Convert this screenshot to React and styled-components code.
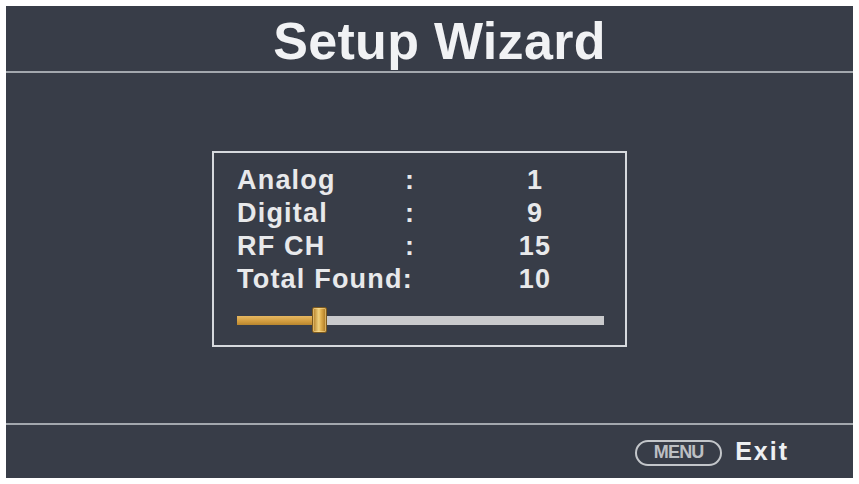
import React from "react";
import styled, { createGlobalStyle } from "styled-components";

const Global = createGlobalStyle`
  html, body { margin: 0; padding: 0; background: #ffffff; }
  body { font-family: "Liberation Sans", Arial, sans-serif; }
  * { box-sizing: border-box; }
`;

const Screen = styled.div`
  margin: 6px;
  width: 847px;
  height: 472px;
  background: #383d48;
  display: flex;
  flex-direction: column;
  font-family: "Liberation Sans", Arial, sans-serif;
`;

const Header = styled.div`
  height: 65px;
  padding-top: 5px;
  display: flex;
  align-items: center;
  justify-content: center;
`;

const Title = styled.h1`
  margin: 0 0 0 20px;
  font-size: 52px;
  line-height: 52px;
  font-weight: 700;
  color: #f1f2f4;
  letter-spacing: 0.3px;
`;

const Divider = styled.div`
  height: 2px;
  flex: none;
  background: #a3a8ae;
`;

const Main = styled.div`
  height: 350px;
  flex: none;
  display: flex;
  align-items: flex-start;
  padding: 78px 0 0 206px;
`;

const Box = styled.div`
  width: 415px;
  height: 196px;
  border: 2px solid #d6d9dd;
  padding: 11px 0 0 23px;
  display: flex;
  flex-direction: column;
`;

const Rows = styled.div`
  display: grid;
  grid-template-columns: 168px 80px 100px;
`;

const Cell = styled.div`
  font-size: 27px;
  line-height: 33px;
  font-weight: 700;
  color: #e8e9eb;
  letter-spacing: 1.2px;
  white-space: nowrap;
  grid-column: ${(p) => (p.$span ? "span 2" : "auto")};
  text-align: ${(p) => (p.$center ? "center" : "left")};
`;

const Slider = styled.div`
  position: relative;
  margin-top: 11px;
  width: 367px;
  height: 26px;
  display: flex;
  align-items: center;
`;

const Track = styled.div`
  width: 100%;
  height: 9px;
  background: #c9cacc;
  display: flex;
`;

const Fill = styled.div`
  height: 100%;
  background: linear-gradient(#e6b862, #d29c3e 60%, #b8862f);
`;

const Thumb = styled.div`
  position: absolute;
  top: 0;
  width: 15px;
  height: 26px;
  border: 1px solid #7d5a1e;
  border-radius: 2px;
  background: linear-gradient(90deg, #b27c25, #f1d27f 45%, #e2b14f 60%, #a8741f);
  box-shadow: inset 0 0 0 1px rgba(255, 230, 160, 0.5);
`;

const Footer = styled.div`
  flex: 1;
  display: flex;
  align-items: center;
  justify-content: flex-end;
  gap: 13px;
  padding-right: 64px;
`;

const Pill = styled.div`
  width: 87px;
  height: 26px;
  border: 2px solid #c3c6ca;
  border-radius: 13px;
  display: flex;
  align-items: center;
  justify-content: center;
  font-size: 18px;
  font-weight: 700;
  color: #bcbfc3;
  letter-spacing: -0.8px;
  transform: translateY(1px);
`;

const Exit = styled.span`
  font-size: 25px;
  font-weight: 700;
  color: #eef0f2;
  letter-spacing: 2px;
`;

const rows = [
  { label: "Analog", value: "1" },
  { label: "Digital", value: "9" },
  { label: "RF CH", value: "15" },
  { label: "Total Found:", value: "10", span: true },
];

export default function App() {
  const pct = 75;
  return (
    <>
      <Global />
      <Screen>
        <Header>
          <Title>Setup Wizard</Title>
        </Header>
        <Divider />
        <Main>
          <Box>
            <Rows>
              {rows.map((r) => (
                <React.Fragment key={r.label}>
                  <Cell $span={r.span}>{r.label}</Cell>
                  {!r.span && <Cell>:</Cell>}
                  <Cell $center>{r.value}</Cell>
                </React.Fragment>
              ))}
            </Rows>
            <Slider>
              <Track>
                <Fill style={{ width: `${pct}px` }} />
              </Track>
              <Thumb style={{ left: `${pct}px` }} />
            </Slider>
          </Box>
        </Main>
        <Divider />
        <Footer>
          <Pill>MENU</Pill>
          <Exit>Exit</Exit>
        </Footer>
      </Screen>
    </>
  );
}
